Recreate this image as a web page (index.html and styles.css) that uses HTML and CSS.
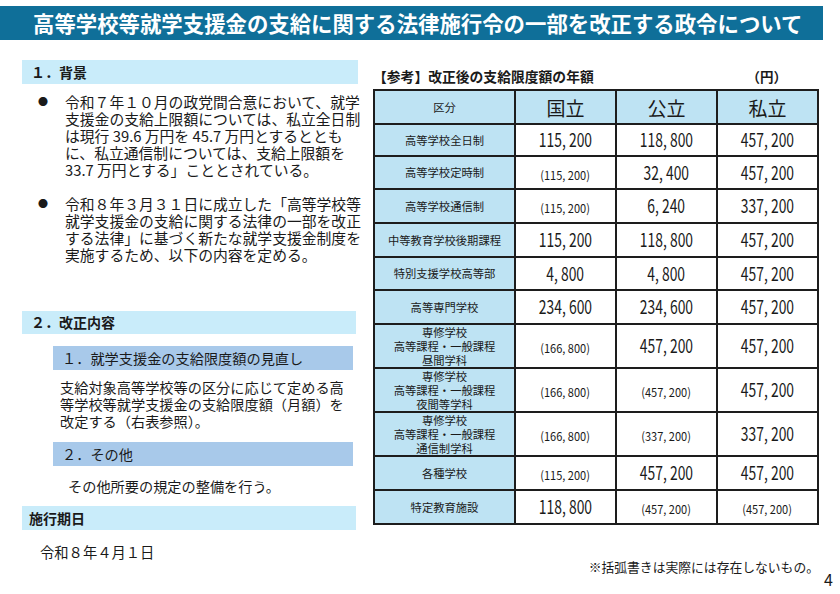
FILE: index.html
```html
<!DOCTYPE html>
<html lang="ja">
<head>
<meta charset="utf-8">
<link rel="stylesheet" href="styles.css">
</head>
<body>
<header class="title-bar"><h1>高等学校等就学支援金の支給に関する法律施行令の一部を改正する政令について</h1></header>
<main class="content">
  <section class="left">
    <h2 class="sec-head">１．背景</h2>
    <ul class="bullets">
      <li><span class="dot">●</span><p>令和７年１０月の政党間合意において、就学<br>支援金の支給上限額については、私立全日制<br>は現行 39.6 万円を 45.7 万円とするととも<br>に、私立通信制については、支給上限額を<br>33.7 万円とする」こととされている。</p></li>
      <li><span class="dot">●</span><p>令和８年３月３１日に成立した「高等学校等<br>就学支援金の支給に関する法律の一部を改正<br>する法律」に基づく新たな就学支援金制度を<br>実施するため、以下の内容を定める。</p></li>
    </ul>
    <h2 class="sec-head sec-head-2">２．改正内容</h2>
    <h3 class="sub-head">１．就学支援金の支給限度額の見直し</h3>
    <p class="sub-text">支給対象高等学校等の区分に応じて定める高<br>等学校等就学支援金の支給限度額（月額）を<br>改定する（右表参照）。</p>
    <h3 class="sub-head sub-head-2">２．その他</h3>
    <p class="sub-text sub-text-2">その他所要の規定の整備を行う。</p>
    <h2 class="sec-head sec-head-3">施行期日</h2>
    <p class="date">令和８年４月１日</p>
  </section>
  <section class="right">
    <div class="table-title"><span class="tt-main">【参考】改正後の支給限度額の年額</span><span class="tt-unit">（円）</span></div>
    <table class="limits">
      <colgroup><col class="c-label"><col class="c-val"><col class="c-val"><col class="c-val"></colgroup>
      <thead>
        <tr class="r-head"><th class="lbl">区分</th><th class="colh">国立</th><th class="colh">公立</th><th class="colh">私立</th></tr>
      </thead>
      <tbody>
        <tr class="r32"><th class="lbl">高等学校全日制</th><td><span class="num">115, 200</span></td><td><span class="num">118, 800</span></td><td><span class="num">457, 200</span></td></tr>
        <tr class="r33"><th class="lbl">高等学校定時制</th><td><span class="pnum">(115, 200)</span></td><td><span class="num">32, 400</span></td><td><span class="num">457, 200</span></td></tr>
        <tr class="r34"><th class="lbl">高等学校通信制</th><td><span class="pnum">(115, 200)</span></td><td><span class="num">6, 240</span></td><td><span class="num">337, 200</span></td></tr>
        <tr class="r34"><th class="lbl">中等教育学校後期課程</th><td><span class="num">115, 200</span></td><td><span class="num">118, 800</span></td><td><span class="num">457, 200</span></td></tr>
        <tr class="r33"><th class="lbl">特別支援学校高等部</th><td><span class="num">4, 800</span></td><td><span class="num">4, 800</span></td><td><span class="num">457, 200</span></td></tr>
        <tr class="r34"><th class="lbl">高等専門学校</th><td><span class="num">234, 600</span></td><td><span class="num">234, 600</span></td><td><span class="num">457, 200</span></td></tr>
        <tr class="r45"><th class="lbl lbl3">専修学校<br>高等課程・一般課程<br>昼間学科</th><td><span class="pnum">(166, 800)</span></td><td><span class="num">457, 200</span></td><td><span class="num">457, 200</span></td></tr>
        <tr class="r45"><th class="lbl lbl3">専修学校<br>高等課程・一般課程<br>夜間等学科</th><td><span class="pnum">(166, 800)</span></td><td><span class="pnum">(457, 200)</span></td><td><span class="num">457, 200</span></td></tr>
        <tr class="r45"><th class="lbl lbl3">専修学校<br>高等課程・一般課程<br>通信制学科</th><td><span class="pnum">(166, 800)</span></td><td><span class="pnum">(337, 200)</span></td><td><span class="num">337, 200</span></td></tr>
        <tr class="r34"><th class="lbl">各種学校</th><td><span class="pnum">(115, 200)</span></td><td><span class="num">457, 200</span></td><td><span class="num">457, 200</span></td></tr>
        <tr class="r34"><th class="lbl">特定教育施設</th><td><span class="num">118, 800</span></td><td><span class="pnum">(457, 200)</span></td><td><span class="pnum">(457, 200)</span></td></tr>
      </tbody>
    </table>
    <p class="note">※括弧書きは実際には存在しないもの。</p>
  </section>
</main>
<div class="page-no">4</div>
</body>
</html>
```
FILE: styles.css
```css
* { box-sizing: border-box; }
html, body { margin: 0; padding: 0; }
body {
  width: 840px;
  height: 594px;
  background: #ffffff;
  color: #1a1a1a;
  font-family: "Noto Sans CJK JP", "Noto Sans", sans-serif;
  position: relative;
  overflow: hidden;
}
.title-bar {
  margin-top: 6px;
  width: 823px;
  height: 34px;
  background: #0f6f99;
  display: flex;
  align-items: center;
  padding-left: 33px;
}
.title-bar h1 {
  margin: 0;
  color: #ffffff;
  font-size: 21.4px;
  font-weight: 700;
  line-height: 34px;
  white-space: nowrap;
}
.content {
  display: flex;
  padding-left: 22px;
  gap: 15px;
}
.left { width: 336px; padding-top: 20px; }
.sec-head {
  margin: 0;
  height: 24px;
  width: 336px;
  background: #c9ecfa;
  font-size: 14px;
  font-weight: 700;
  line-height: 24px;
  padding-left: 9px;
}
.sec-head-2 { margin-top: 48px; height: 23px; line-height: 23px; width: 334px; }
.sec-head-3 { margin-top: 11px; width: 334px; padding-left: 7px; }
.bullets {
  list-style: none;
  margin: 9px 0 0 0;
  padding: 0;
}
.bullets li {
  display: flex;
  margin-bottom: 17px;
}
.bullets li:last-child { margin-bottom: 0; }
.dot {
  width: 43px;
  padding-left: 16px;
  font-size: 10px;
  line-height: 17px;
  flex: none;
}
.bullets p {
  margin: 0;
  font-size: 14.8px;
  line-height: 17px;
  white-space: nowrap;
}
.sub-head {
  margin: 12px 0 0 31px;
  width: 300px;
  height: 24px;
  background: #a8c9ea;
  font-size: 14.2px;
  font-weight: 400;
  line-height: 24px;
  padding-left: 9px;
}
.sub-head-2 { margin-top: 12px; }
.sub-text {
  margin: 9px 0 0 38px;
  font-size: 14.2px;
  line-height: 17px;
  white-space: nowrap;
}
.sub-text-2 { margin: 12px 0 0 46px; }
.date {
  margin: 13px 0 0 18px;
  font-size: 14.3px;
  line-height: 17px;
}
.right { width: 446px; padding-top: 28px; }
.table-title {
  display: flex;
  justify-content: space-between;
  height: 17px;
  line-height: 17px;
  padding-right: 32px;
}
.tt-main { font-size: 13.8px; font-weight: 700; }
.tt-unit { font-size: 13.5px; font-weight: 700; }
.limits {
  margin-top: 4px;
  width: 445px;
  border-collapse: collapse;
  table-layout: fixed;
}
.c-label { width: 141px; }
.c-val { width: 101px; }
.limits th, .limits td {
  border: 2px solid #1d1d1d;
  padding: 0;
  text-align: center;
  vertical-align: middle;
}
.limits td { background: #ffffff; }
.lbl {
  background: #bee3f3;
  font-size: 11.3px;
  font-weight: 400;
  line-height: 15px;
}
.lbl3 { line-height: 14px; }
.colh {
  background: #bee3f3;
  font-size: 19px;
  font-weight: 400;
}
.r-head th { height: 34px; }
.r32 > * { height: 32px; }
.r33 > * { height: 33px; }
.r34 > * { height: 34px; }
.r45 > * { height: 44px; }
.num {
  display: inline-block;
  font-size: 18.5px;
  line-height: 20px;
  transform: scaleX(0.75);
  white-space: nowrap;
}
.pnum {
  display: inline-block;
  font-size: 12px;
  line-height: 14px;
  transform: scaleX(0.92);
  white-space: nowrap;
}
.note {
  margin: 34px 0 0 0;
  text-align: right;
  font-size: 12.8px;
  line-height: 16px;
  white-space: nowrap;
}
.page-no {
  position: absolute;
  left: 824px;
  top: 569px;
  font-size: 16px;
  line-height: 20px;
}
```
